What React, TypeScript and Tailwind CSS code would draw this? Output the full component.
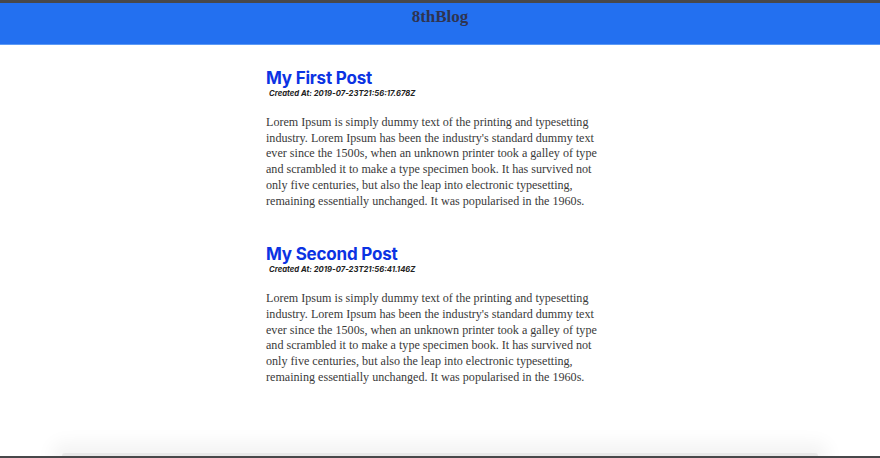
const posts = [
  { title: "My First Post", createdAt: "2019-07-23T21:56:17.678Z" },
  { title: "My Second Post", createdAt: "2019-07-23T21:56:41.146Z" },
];

const lorem =
  "Lorem Ipsum is simply dummy text of the printing and typesetting industry. Lorem Ipsum has been the industry's standard dummy text ever since the 1500s, when an unknown printer took a galley of type and scrambled it to make a type specimen book. It has survived not only five centuries, but also the leap into electronic typesetting, remaining essentially unchanged. It was popularised in the 1960s.";

function Header() {
  return (
    <header className="h-[42px] bg-[#2370f0] border-b border-[#5d9af5] flex justify-center pt-[4px]">
      <h1 className="font-['Liberation_Serif',serif] font-bold text-[17px] leading-[20px] text-[#2f3450]">
        8thBlog
      </h1>
    </header>
  );
}

function Post({ title, createdAt }: { title: string; createdAt: string }) {
  return (
    <article className="mb-[34px]">
      <h2 className="font-['Inter',sans-serif] font-bold text-[17px] leading-[22px] tracking-[-0.2px] text-[#0b33e3]">
        {title}
      </h2>
      <p className="pl-[3px] font-['Inter',sans-serif] font-bold italic text-[7.7px] leading-[10px] text-[#222]">
        Created At: {createdAt}
      </p>
      <p className="mt-[16px] w-[338px] font-['Liberation_Serif',serif] text-[12.1px] leading-[15.7px] text-[#3a3a3a]">
        {lorem}
      </p>
    </article>
  );
}

export default function App() {
  return (
    <div className="h-[458px] flex flex-col bg-white border-t-[3px] border-b-2 border-[#48484a] overflow-hidden">
      <Header />
      <main className="w-[348px] mx-auto pt-[22px]">
        {posts.map((p) => (
          <Post key={p.title} {...p} />
        ))}
      </main>
      <div className="mt-auto mx-[62px] h-[3px] rounded-t bg-[#e8e8e8] shadow-[0_0_18px_10px_rgba(0,0,0,0.05)]" />
    </div>
  );
}
